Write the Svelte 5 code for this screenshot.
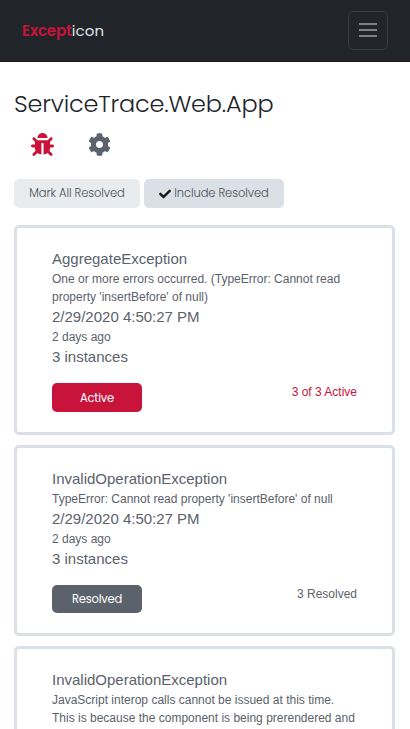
<script>
  const errors = [
    {
      name: 'AggregateException',
      message: "One or more errors occurred. (TypeError: Cannot read property 'insertBefore' of null)",
      time: '2/29/2020 4:50:27 PM',
      age: '2 days ago',
      count: '3 instances',
      status: 'Active',
      summary: '3 of 3 Active',
      active: true
    },
    {
      name: 'InvalidOperationException',
      message: "TypeError: Cannot read property 'insertBefore' of null",
      time: '2/29/2020 4:50:27 PM',
      age: '2 days ago',
      count: '3 instances',
      status: 'Resolved',
      summary: '3 Resolved',
      active: false
    },
    {
      name: 'InvalidOperationException',
      message: 'JavaScript interop calls cannot be issued at this time. This is because the component is being prerendered and'
    }
  ];
</script>

<div class="page">
  <header>
    <div class="brand"><b>Except</b><span>icon</span></div>
    <button class="toggler" aria-label="Toggle navigation">
      <svg width="18" height="23" viewBox="0 0 18 23"><path d="M0 5h18M0 11h18M0 17h18" stroke="rgba(255,255,255,.42)" stroke-width="2" /></svg>
    </button>
  </header>

  <main>
    <h1>ServiceTrace.Web.App</h1>
    <nav>
      <svg width="23" height="23" viewBox="0 0 512 512" fill="#c8133b"><path d="M511.988 288.9c-.478 17.43-15.217 31.1-32.653 31.1H424v16c0 21.864-4.882 42.584-13.6 61.145l60.228 60.228c12.496 12.497 12.496 32.758 0 45.255-12.498 12.497-32.759 12.496-45.256 0l-54.736-54.736C345.886 467.965 314.351 480 280 480V236c0-6.627-5.373-12-12-12h-24c-6.627 0-12 5.373-12 12v244c-34.351 0-65.886-12.035-90.636-32.108l-54.736 54.736c-12.498 12.497-32.759 12.496-45.256 0-12.496-12.497-12.496-32.758 0-45.255l60.228-60.228C92.882 378.584 88 357.864 88 336v-16H32.666C15.23 320 .491 306.33.013 288.9-.484 270.816 14.028 256 32 256h56v-58.745l-46.628-46.628c-12.496-12.497-12.496-32.758 0-45.255 12.498-12.497 32.758-12.497 45.256 0L141.255 160h229.489l54.627-54.627c12.498-12.497 32.758-12.497 45.256 0 12.496 12.497 12.496 32.758 0 45.255L424 197.255V256h56c17.972 0 32.484 14.816 31.988 32.9zM257 0c-61.856 0-112 50.144-112 112h224C369 50.144 318.856 0 257 0z" /></svg>
      <svg width="23" height="23" viewBox="0 0 512 512" fill="#5b626b"><path d="M487.4 315.7l-42.6-24.6c4.3-23.2 4.3-47 0-70.2l42.6-24.6c4.9-2.8 7.1-8.6 5.5-14-11.1-35.6-30-67.8-54.7-94.6-3.8-4.1-10-5.1-14.8-2.3L380.8 110c-17.9-15.4-38.5-27.3-60.8-35.1V25.8c0-5.6-3.9-10.5-9.4-11.7-36.7-8.2-74.3-7.8-109.2 0-5.5 1.2-9.4 6.1-9.4 11.7V75c-22.2 7.9-42.8 19.8-60.8 35.1L88.7 85.5c-4.9-2.8-11-1.9-14.8 2.3-24.7 26.7-43.6 58.9-54.7 94.6-1.7 5.4.6 11.2 5.5 14L67.3 221c-4.3 23.2-4.3 47 0 70.2l-42.6 24.6c-4.9 2.8-7.1 8.6-5.5 14 11.1 35.6 30 67.8 54.7 94.6 3.8 4.1 10 5.1 14.8 2.3l42.6-24.6c17.9 15.4 38.5 27.3 60.8 35.1v49.2c0 5.6 3.9 10.5 9.4 11.7 36.7 8.2 74.3 7.8 109.2 0 5.5-1.2 9.4-6.1 9.4-11.7v-49.2c22.2-7.9 42.8-19.8 60.8-35.1l42.6 24.6c4.9 2.8 11 1.9 14.8-2.3 24.7-26.7 43.6-58.9 54.7-94.6 1.5-5.5-.7-11.3-5.6-14.1zM256 336c-44.1 0-80-35.9-80-80s35.9-80 80-80 80 35.9 80 80-35.9 80-80 80z" /></svg>
    </nav>
    <div class="tools">
      <button class="tool">Mark All Resolved</button>
      <button class="tool on">
        <svg width="12" height="12" viewBox="0 0 512 512" fill="#15181c"><path d="M173.898 439.404l-166.4-166.4c-9.997-9.997-9.997-26.206 0-36.204l36.203-36.204c9.997-9.998 26.207-9.998 36.204 0L192 312.69 432.095 72.596c9.997-9.997 26.207-9.997 36.204 0l36.203 36.204c9.997 9.997 9.997 26.206 0 36.204l-294.4 294.401c-9.998 9.997-26.207 9.997-36.204-.001z" /></svg>
        <span>Include Resolved</span>
      </button>
    </div>

    {#each errors as e}
      <article>
        <h2>{e.name}</h2>
        <p>{e.message}</p>
        {#if e.status}
          <div class="big">{e.time}</div>
          <p>{e.age}</p>
          <div class="big">{e.count}</div>
          <footer class:active={e.active}>
            <button>{e.status}</button>
            <span>{e.summary}</span>
          </footer>
        {/if}
      </article>
    {/each}
  </main>
</div>

<style>
  .page {
    height: 729px;
    overflow: hidden;
    background: #fff;
    font-family: 'Liberation Sans', Arial, sans-serif;
    color: #5b626b;
  }
  header {
    box-sizing: border-box;
    height: 62px;
    padding: 0 22px;
    display: flex;
    align-items: center;
    justify-content: space-between;
    background: #212529;
    border-bottom: 1px solid #1b1622;
  }
  button { font: inherit; margin: 0; padding: 0; border: 0; box-sizing: border-box; }
  .brand, h1, button {
    font-family: Poppins, Inter, sans-serif;
    font-feature-settings: 'cv11';
  }
  .brand { font-size: 15px; color: #dee2e6; letter-spacing: 0.1px; }
  .brand b { color: #c8133b; font-weight: 600; letter-spacing: -0.1px; }
  .toggler {
    width: 40px;
    height: 39px;
    display: flex;
    align-items: center;
    justify-content: center;
    background: none;
    border: 1px solid #383b3f;
    border-radius: 5px;
  }
  main { padding: 24px 15px 0 14px; }
  h1 {
    margin: 0;
    font-size: 24px;
    line-height: 36px;
    font-weight: 300;
    letter-spacing: -0.2px;
    color: #212529;
    white-space: nowrap;
  }
  nav { display: flex; gap: 34px; padding: 11px 0 0 17px; height: 46px; }
  .tools { display: flex; gap: 4px; margin-bottom: 17px; }
  .tool {
    height: 29px;
    width: 126px;
    border-radius: 5px;
    background: #e9ecef;
    color: #495057;
    font-size: 11.5px;
    font-weight: 300;
    display: flex;
    align-items: center;
    justify-content: center;
    gap: 3px;
    white-space: nowrap;
    letter-spacing: -0.1px;
  }
  .on { width: 140px; background: #dae0e5; }
  article {
    border: 3px solid #dae0e5;
    border-radius: 5px;
    padding: 20px 35px;
    margin-bottom: 10px;
  }
  h2, .big { margin: 0; font-size: 15px; line-height: 22px; font-weight: 400; }
  p { margin: 0; font-size: 12px; line-height: 18px; }
  footer {
    display: flex;
    justify-content: space-between;
    margin-top: 15px;
    font-size: 12px;
    line-height: 18px;
  }
  footer button {
    width: 90px;
    height: 28px;
    border-radius: 5px;
    background: #5b626b;
    color: #fff;
    font-size: 11.5px;
    letter-spacing: -0.2px;
  }
  .active { color: #c8133b; }
  .active button { height: 29px; background: #c8133b; }
</style>
